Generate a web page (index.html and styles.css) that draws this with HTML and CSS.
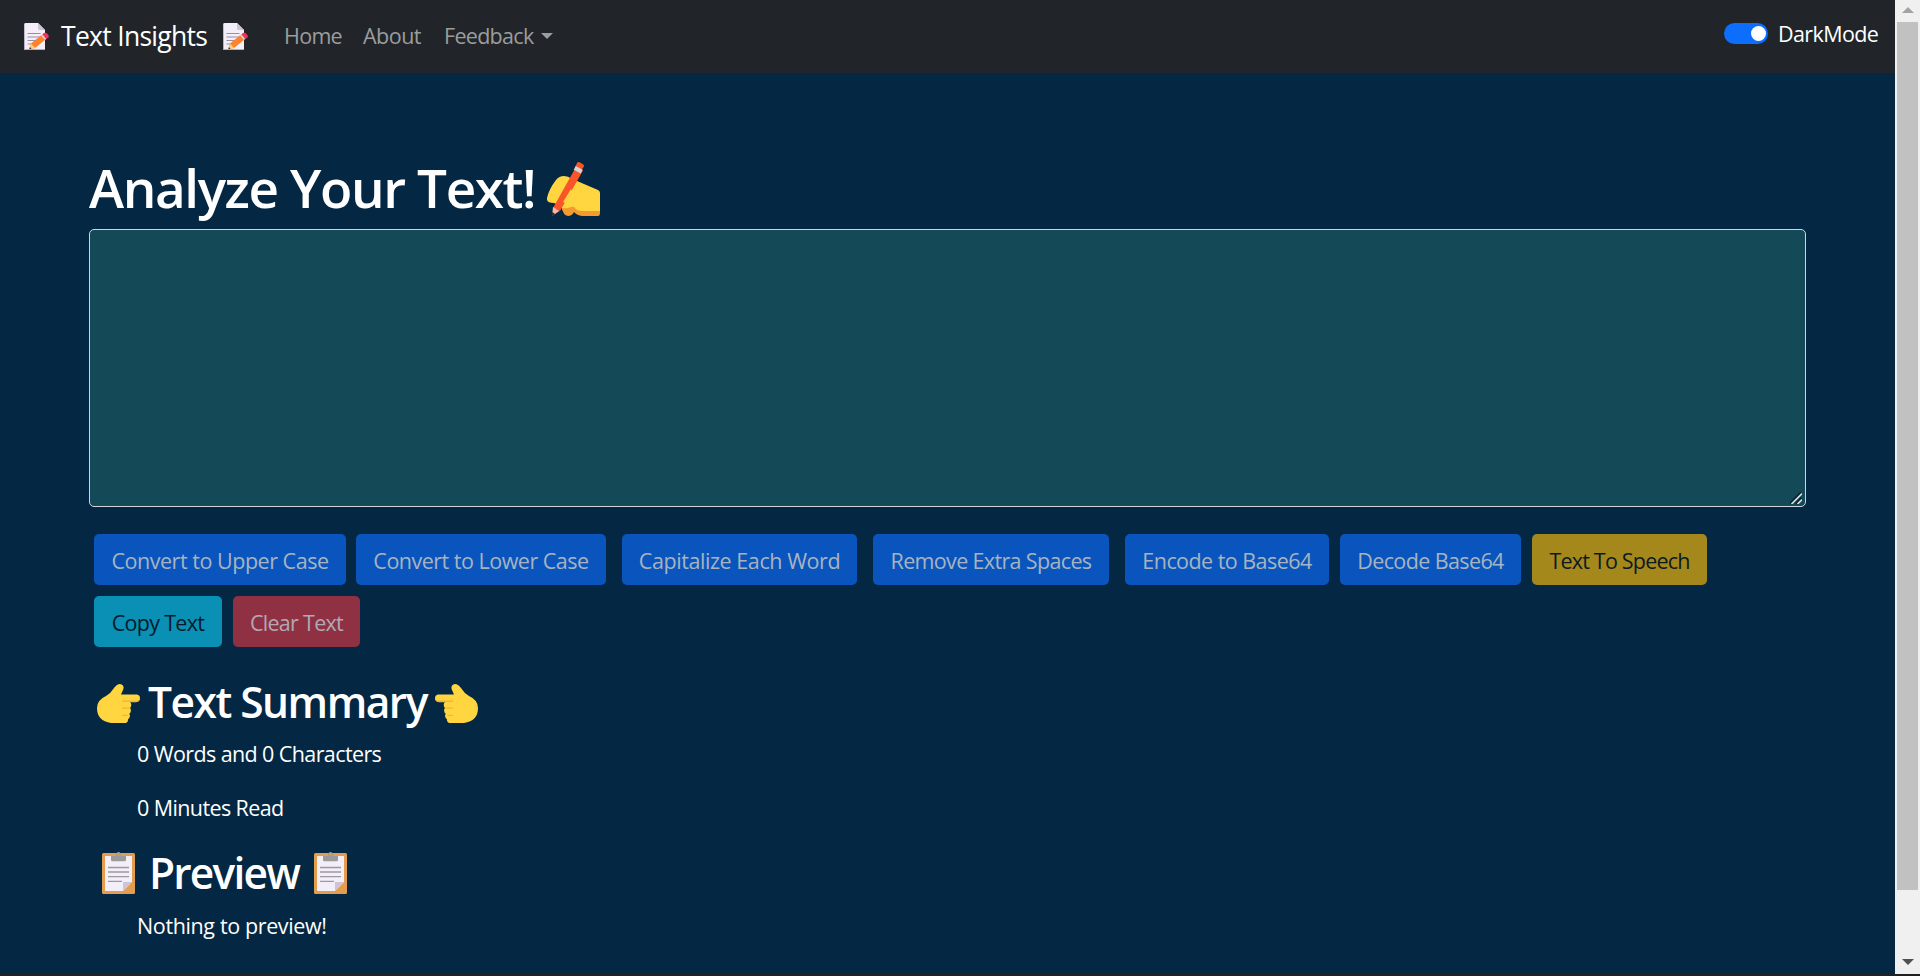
FILE: index.html
```
<!DOCTYPE html>
<html lang="en">
<head>
<meta charset="utf-8">
<title>Text Insights</title>
<link rel="stylesheet" href="styles.css">
</head>
<body>
<svg class="defs" width="0" height="0">
  <symbol id="memo" viewBox="0 0 25 27">
    <path d="M1.500 0H14l7 7v20H1.500Q0 27 0 25.500V1.500Q0 0 1.500 0Z" fill="#f3eef8"/>
    <path d="M14 0l7 7h-5.500Q14 7 14 5.500Z" fill="#cdc4d6"/>
    <path d="M0 25.500Q0 27 1.500 27H21v-1H1L.7 1Q0 1 0 2Z" fill="#b4acbc"/>
    <path d="M3.500 10.500h13M3.500 14h13M3.500 17.500h10M3.500 21h6" stroke="#998ea4" stroke-width="1"/>
    <path d="M7 20.500L17.500 12l4 4.500L11 25l-5.500 1Z" fill="#ff822d"/>
    <path d="M7 20.500L11 25l-5.500 1.200Z" fill="#ffce7c"/>
    <path d="M5.900 24l1.600 1.700-2.200.6Z" fill="#402a32"/>
    <path d="M17 12.400l1.500-1.200 4 4.500-1.500 1.200Z" fill="#d3d3d3"/>
    <path d="M18.300 11.300l1.700-1.300q1.800-.8 3.500 1 2 2 1 3.400l-2.200 1.600Z" fill="#fa2f55"/>
  </symbol>
  <symbol id="point" viewBox="0 0 43 39">
    <path d="M17 4q3-4 6-4 5 1 3 6l-2 4.500h16q3 .5 3 3.700t-4 4h-6q1.500 1 1.200 3-.2 2-1.200 2.700 1.200 1.300.8 3.300-.3 2-1.600 2.600 1 1.300.6 3-.5 2-1.800 2.400.5 3-2.500 4H16Q0 38 0 24q0-8 9-12 5-3 8-8Z" fill="#ffd640"/>
    <path d="M25 16.500h15q2-.5 3-2.500 0 4-4 4H26q-2-.5-1-1.500ZM25 23.500h8.500q-1 1.200-3 1.200h-5.500ZM25 30.700h6.500q-1 1.200-3 1.200h-3.500Z" fill="#ffb02e"/>
  </symbol>
  <symbol id="clip" viewBox="0 0 33 42">
    <rect y="1" width="33" height="41" rx="1.500" fill="#e39d4e"/>
    <path d="M3 4h27v26l-9 9H3Z" fill="#f3eef8"/>
    <path d="M21 30h9l-9 9Z" fill="#cdc4d6"/>
    <path d="M9 4h5q0-4 2.500-4T19 4h5v4q0 1.300-1.300 1.300H10.300Q9 9.300 9 8Z" fill="#9b9b9b"/>
    <circle cx="16.500" cy="2.500" r="1.200" fill="#e39d4e"/>
    <path d="M6 15.500h21M6 20h21M6 24.600h21M6 29.400h14" stroke="#9b9b9f" stroke-width="1.300"/>
  </symbol>
  <symbol id="write" viewBox="0 0 53 54">
    <path d="M9 18q3-4 8-4 4 0 8 3l5 2 21 9q2 1 2 3v20H30q-6-3-8 0l-5-1q-2-2-3-6l-7-3q-8 0-7-5 2-9 9-18Z" fill="#ffd640"/>
    <path d="M15 46q4 1 9-1 3-1 4 1 2 3 7 3h18v2q0 3-2 3H35q-5-.4-8-4-2 4-6 4-5-1-6-8Z" fill="#f59a2c"/>
    <path d="M29 5l7 3.500L13 49l-7-3Z" fill="#fa5528"/>
    <path d="M24 27l-8 13q3 2 6-2 2-3 5-5Z" fill="#ffd640"/>
    <path d="M30 1q1-1.500 3-.5l3 1.700q1.500 1 .7 2.600L34 9l-6-3.500Z" fill="#fa5528"/>
    <path d="M28.700 4l7 3.700-2 3.800-7-3.700Z" fill="#d3d3d3"/>
    <path d="M6 45l6.500 4L5 54Z" fill="#ffb5a0"/><path d="M5.200 50l2.800 2-3 2Z" fill="#222"/>
  </symbol>
</svg>
<div class="window">
  <div class="page">
    <nav class="navbar">
      <a class="brand"><svg class="memo"><use href="#memo"/></svg><span class="brand-text">Text Insights</span><svg class="memo"><use href="#memo"/></svg></a>
      <a class="link home">Home</a>
      <a class="link about">About</a>
      <a class="link feedback">Feedback</a>
      <span class="caret"></span>
      <label class="mode"><span class="switch"></span><span class="mode-text">DarkMode</span></label>
    </nav>
    <main>
      <h1><span>Analyze Your Text!</span><svg class="write"><use href="#write"/></svg></h1>
      <div class="editor"><svg class="grip" viewBox="0 0 12 12"><path d="M0 11.500L11 .5M6 11.500L11.500 6" stroke="#06222c" stroke-width="2"/><path d="M1.500 12L12 1.500M7.500 12L12 7.500" stroke="#d5dfe2" stroke-width="1.700"/></svg></div>
      <div class="buttons">
        <button class="btn upper">Convert to Upper Case</button>
        <button class="btn lower">Convert to Lower Case</button>
        <button class="btn cap">Capitalize Each Word</button>
        <button class="btn remove">Remove Extra Spaces</button>
        <button class="btn encode">Encode to Base64</button>
        <button class="btn decode">Decode Base64</button>
        <button class="btn speech">Text To Speech</button>
      </div>
      <div class="buttons second">
        <button class="btn copy">Copy Text</button>
        <button class="btn clear">Clear Text</button>
      </div>
      <h2 class="summary"><svg class="point"><use href="#point"/></svg><span>Text Summary</span><svg class="point flip"><use href="#point"/></svg></h2>
      <p class="words">0 Words and 0 Characters</p>
      <p class="minutes">0 Minutes Read</p>
      <h2 class="preview"><svg class="clip"><use href="#clip"/></svg><span>Preview</span><svg class="clip"><use href="#clip"/></svg></h2>
      <p class="nothing">Nothing to preview!</p>
    </main>
  </div>
  <div class="scrollbar"><span class="arrow up"></span><span class="thumb"></span><span class="arrow down"></span></div>
</div>
</body>
</html>
```
FILE: styles.css
```
* { box-sizing: border-box; }
body { margin: 0; height: 976px; overflow: hidden; background: #202124; color: #fff; font: 21.500px/33px "Open Sans", "Noto Sans", sans-serif; white-space: nowrap; }
.defs { display: block; }
svg { flex: none; }
.window { display: flex; height: 974px; }
.page { width: 1895px; background: #042743; }
.navbar { display: flex; align-items: center; height: 73px; padding-left: 24px; background: #212529; }
.brand { display: flex; align-items: center; width: 260px; font-size: 26.500px; }
.memo { width: 25px; height: 27px; }
.brand-text { width: 174px; padding-left: 12px; letter-spacing: -.7px; }
.link { padding-bottom: 2px; color: #9b9d9e; letter-spacing: -.7px; }
.home { width: 79px; }
.about { width: 81px; letter-spacing: -.5px; }
.feedback { width: 97px; }
.caret { border: 6px solid transparent; border-top-color: #9b9d9e; border-bottom: 0; margin-top: -2px; }
.mode { display: flex; align-items: center; gap: 10px; margin: -6px 17px 0 auto; }
.switch { display: flex; justify-content: flex-end; align-items: center; width: 44px; height: 21px; padding-right: 2px; border-radius: 11px; background: #0d6efd; }
.switch::after { content: ""; width: 15px; height: 15px; border-radius: 50%; background: #fff; }
.mode-text { width: 100px; letter-spacing: -.6px; }
main { padding: 80px 89px 0; }
h1, h2, p { margin: 0; }
h1 { display: flex; height: 76px; font-size: 53px; line-height: 70px; font-weight: 600; letter-spacing: -1.400px; }
h1 span { width: 458px; }
.write { width: 53px; height: 54px; margin-top: 9px; }
.editor { display: flex; justify-content: flex-end; align-items: flex-end; height: 278px; border: 1px solid #ced4da; border-radius: 5px; background: #144957; padding: 0 3px 2px 0; }
.grip { width: 12px; height: 12px; }
.buttons { display: flex; padding: 27px 0 0 5px; }
.second { padding-top: 11px; }
.btn { height: 51px; padding: 2px 0 0; border: 0; border-radius: 5px; background: #0a55bd; color: #a7b4c0; font: inherit; letter-spacing: -.6px; text-align: center; }
.upper { width: 252px; margin-right: 10px; letter-spacing: -.470px; }
.lower { width: 250px; margin-right: 16px; letter-spacing: -.5px; }
.cap { width: 235px; margin-right: 16px; letter-spacing: -.430px; }
.remove { width: 236px; margin-right: 16px; letter-spacing: -.650px; }
.encode { width: 204px; margin-right: 11px; letter-spacing: -.550px; }
.decode { width: 181px; margin-right: 11px; }
.speech { width: 175px; background: #a5881c; color: #0c1a20; letter-spacing: -.8px; }
.copy { width: 128px; margin-right: 11px; background: #0a90b4; color: #021a2b; letter-spacing: -.7px; }
.clear { width: 127px; background: #903143; color: #b0a9b5; letter-spacing: -.7px; }
h2 { display: flex; align-items: center; height: 53px; font-size: 42.500px; line-height: 53px; font-weight: 600; letter-spacing: -1.500px; }
.summary { margin-top: 28px; padding-left: 8px; }
.summary span { width: 295px; padding-left: 8px; }
.point { width: 43px; height: 39px; margin-top: 3px; }
.flip { transform: scaleX(-1); }
p { padding-left: 48px; letter-spacing: -.6px; }
.words { margin-top: 9px; }
.minutes { margin-top: 21px; }
.preview { margin-top: 22px; padding-left: 13px; letter-spacing: -1.800px; }
.preview span { width: 179px; padding-left: 14px; }
.clip { width: 33px; height: 42px; }
.nothing { margin-top: 10px; letter-spacing: -.370px; }
.scrollbar { display: flex; flex-direction: column; align-items: center; width: 25px; padding: 7px 2px 9px; background: #f0f0f0; }
.thumb { width: 21px; height: 868px; margin: 9px 0 auto; background: #c1c1c1; }
.arrow { border: 6px solid transparent; }
.up { border-top: 0; border-bottom-color: #a3a3a3; }
.down { border-bottom: 0; border-top-color: #505050; }
```
